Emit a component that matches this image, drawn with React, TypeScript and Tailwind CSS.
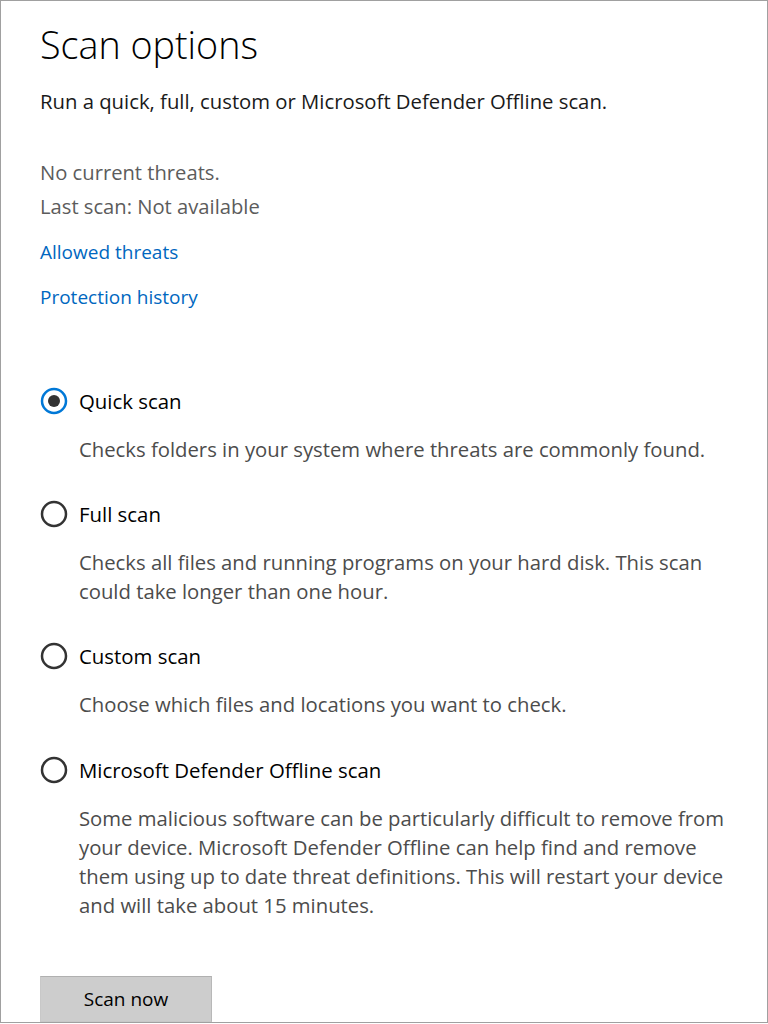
import type { ReactNode } from 'react'

const font = { fontFamily: '"Open Sans", "Noto Sans", "Liberation Sans", sans-serif' }

function Radio({ checked }: { checked?: boolean }) {
  return (
    <svg width="28" height="28" viewBox="0 0 28 28" className="shrink-0">
      <circle cx="14" cy="14" r="12" fill="none" stroke={checked ? '#0078d7' : '#333333'} strokeWidth="2.5" />
      {checked && <circle cx="14" cy="14" r="6" fill="#333333" />}
    </svg>
  )
}

function Option({ label, checked, lines, mt }: { label: string; checked?: boolean; lines: string[]; mt: string }) {
  return (
    <div className={mt}>
      <div className="flex items-center gap-[11px] h-[28px] leading-[28px] text-[20.4px] text-black">
        <Radio checked={checked} />
        <span>{label}</span>
      </div>
      <div className="mt-[20px] pl-[39px] text-[20.3px] leading-[29px] text-[#4c4c4c]">
        {lines.map((l) => (
          <div key={l} className="whitespace-nowrap">
            {l}
          </div>
        ))}
      </div>
    </div>
  )
}

function Link({ children, mt }: { children: ReactNode; mt: string }) {
  return <div className={`${mt} h-[28px] leading-[28px] text-[19px] text-[#0067c0]`}>{children}</div>
}

export default function App() {
  return (
    <div style={font} className="h-[1023px] w-[768px] border border-[#a0a0a0] bg-white overflow-hidden">
      <div className="pl-[39px] pt-[20px]">
        <h1 className="h-[48px] leading-[48px] text-[37.7px] font-light text-black">Scan options</h1>
        <p className="mt-[18px] h-[28px] leading-[28px] text-[20.3px] text-[#1a1a1a]">
          Run a quick, full, custom or Microsoft Defender Offline scan.
        </p>

        <div className="mt-[43px] h-[28px] leading-[28px] text-[20.2px] text-[#5c5c5c]">No current threats.</div>
        <div className="mt-[6px] h-[28px] leading-[28px] text-[20.2px] text-[#5c5c5c]">Last scan: Not available</div>
        <Link mt="mt-[18px]">Allowed threats</Link>
        <Link mt="mt-[17px]">Protection history</Link>

        <Option
          mt="mt-[76px]"
          checked
          label="Quick scan"
          lines={['Checks folders in your system where threats are commonly found.']}
        />
        <Option
          mt="mt-[36px]"
          label="Full scan"
          lines={[
            'Checks all files and running programs on your hard disk. This scan',
            'could take longer than one hour.',
          ]}
        />
        <Option mt="mt-[36px]" label="Custom scan" lines={['Choose which files and locations you want to check.']} />
        <Option
          mt="mt-[37px]"
          label="Microsoft Defender Offline scan"
          lines={[
            'Some malicious software can be particularly difficult to remove from',
            'your device. Microsoft Defender Offline can help find and remove',
            'them using up to date threat definitions. This will restart your device',
            'and will take about 15 minutes.',
          ]}
        />

        <button className="mt-[56px] h-[46px] w-[172px] bg-[#cdcdcd] border border-[#c8c8c8] border-t-[#b0b0b0] border-r-[#b8b8b8] text-[19px] text-black">
          Scan now
        </button>
      </div>
    </div>
  )
}
